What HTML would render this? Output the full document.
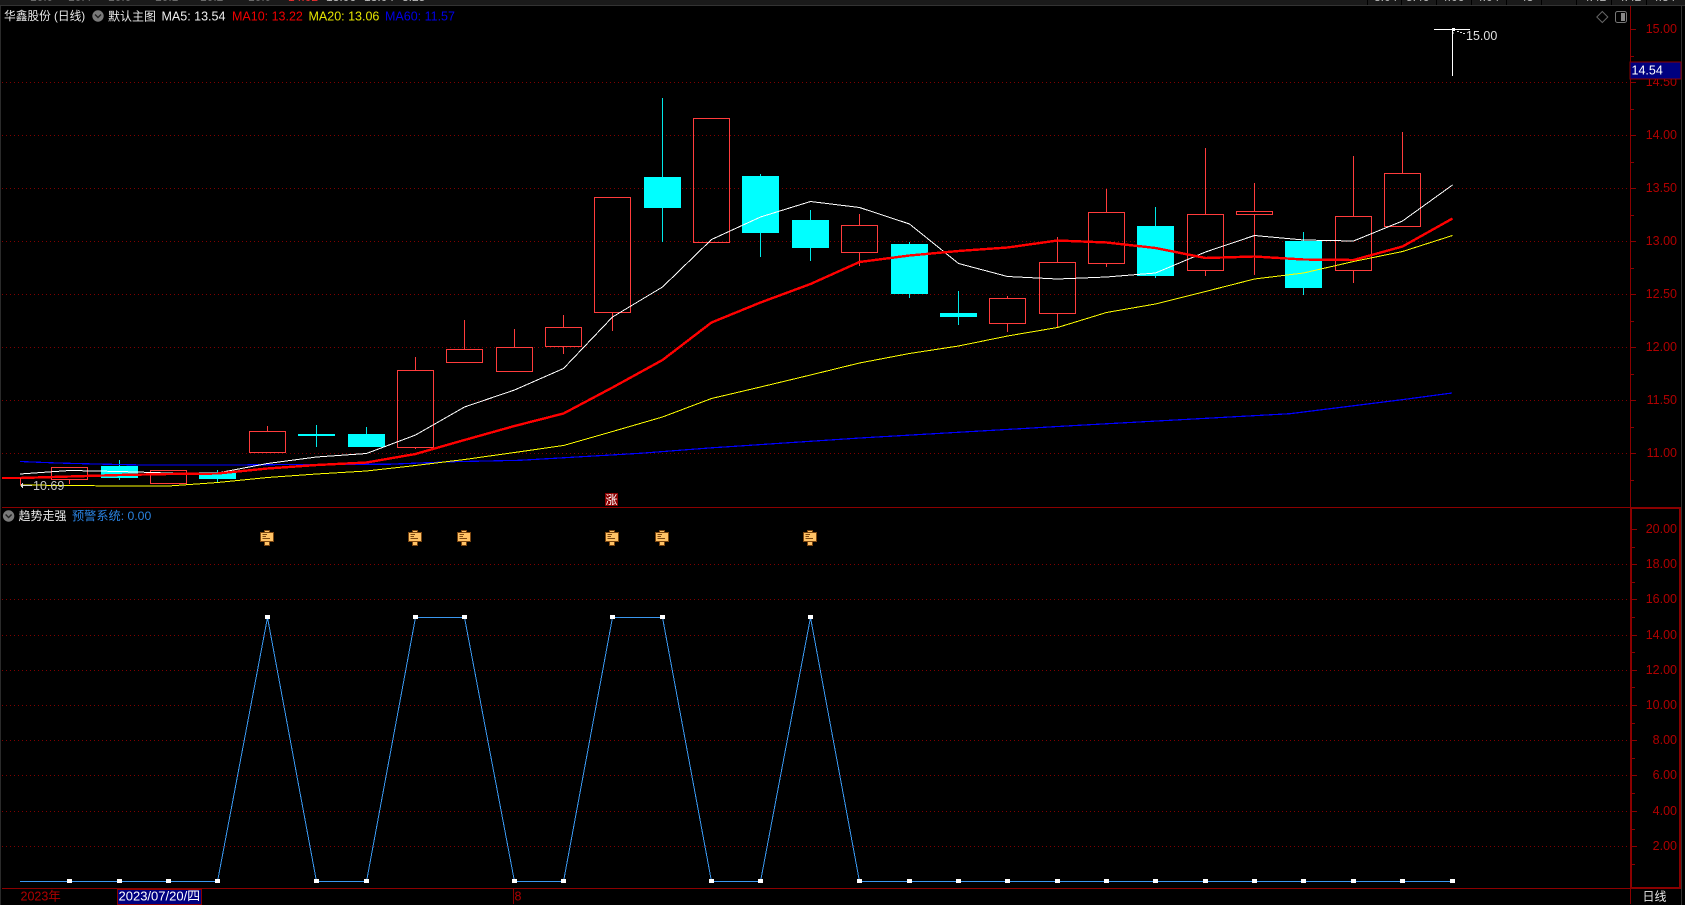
<!DOCTYPE html>
<html lang="zh">
<head>
<meta charset="utf-8">
<title>华鑫股份 (日线)</title>
<style>
html,body{margin:0;padding:0;background:#000;}
body{width:1685px;height:905px;overflow:hidden;position:relative;}
svg{position:absolute;left:0;top:0;display:block;}
text{font-family:"Liberation Sans","Noto Sans CJK SC",sans-serif;font-size:12.5px;}
.ax{fill:#b00000;text-anchor:end;}
</style>
</head>
<body>
<svg width="1685" height="905" viewBox="0 0 1685 905" xmlns="http://www.w3.org/2000/svg">
<defs>
<g id="sig" shape-rendering="crispEdges">
<rect x="-2.5" y="0.5" width="5" height="3" fill="#ffc266" stroke="#7a4510"/>
<rect x="-2.5" y="11.5" width="5" height="4" fill="#ffc266" stroke="#7a4510"/>
<rect x="-6.5" y="2.5" width="13" height="9" fill="#ffc266" stroke="#7a4510"/>
<path d="M-4.5 4.5H0M-4.5 6.5H-1M-4.5 8.5H3" stroke="#7a4510" fill="none"/>
</g>
</defs>
<rect width="1685" height="905" fill="#000"/>

<!-- top strip -->
<rect x="0" y="0" width="1685" height="5" fill="#1a1a1a"/>
<rect x="0" y="5" width="1685" height="1" fill="#333"/>
<svg x="0" y="0" width="1685" height="4" style="position:static">
<text x="30" y="0.5" style="font-size:12px" fill="#bbb">13.5</text>
<text x="68" y="0.5" style="font-size:12px" fill="#bbb">13.4</text>
<text x="108" y="0.5" style="font-size:12px" fill="#bbb">13.3</text>
<text x="155" y="0.5" style="font-size:12px" fill="#bbb">13.1</text>
<text x="200" y="0.5" style="font-size:12px" fill="#bbb">13.2</text>
<text x="248" y="0.5" style="font-size:12px" fill="#bbb">13.5</text>
<text x="288" y="1" style="font-size:12px" fill="#f03030">14.02</text>
<text x="326" y="1" style="font-size:12px" fill="#bbb">13.06</text>
<text x="364" y="1" style="font-size:12px" fill="#bbb">13.04</text>
<text x="402" y="1" style="font-size:12px" fill="#bbb">3.25</text>
<text x="1374" y="1" style="font-size:12px" fill="#bbb">3.04</text>
<text x="1406" y="1" style="font-size:12px" fill="#bbb">5.46</text>
<text x="1441" y="1" style="font-size:12px" fill="#bbb">4.06</text>
<text x="1476" y="1" style="font-size:12px" fill="#bbb">4.04</text>
<text x="1520" y="1" style="font-size:12px" fill="#bbb">43</text>
<text x="1583" y="1" style="font-size:12px" fill="#bbb">4.42</text>
<text x="1618" y="1" style="font-size:12px" fill="#bbb">4.42</text>
<text x="1652" y="1" style="font-size:12px" fill="#bbb">4.34</text>
</svg>
<path d="M1367.5 0V5M1401.5 0V5M1436.5 0V5M1471.5 0V5M1506.5 0V5M1541.5 0V5M1576.5 0V5M1611.5 0V5M1646.5 0V5" stroke="#000" shape-rendering="crispEdges"/>

<!-- edges -->
<rect x="0" y="6" width="1" height="899" fill="#2a2a2a"/>
<rect x="1681" y="6" width="1" height="899" fill="#333"/>

<!-- grids -->
<path d="M2 82.5H1630M2 135.5H1630M2 188.5H1630M2 241.5H1630M2 294.5H1630M2 347.5H1630M2 400.5H1630M2 453.5H1630M2 564.5H1630M2 599.5H1630M2 635.5H1630M2 670.5H1630M2 705.5H1630M2 740.5H1630M2 775.5H1630M2 811.5H1630M2 846.5H1630" stroke="#800000" stroke-dasharray="1 3" fill="none" shape-rendering="crispEdges"/>

<!-- axis frame -->
<g shape-rendering="crispEdges" fill="none" stroke="#8b0000">
<path d="M1630.5 6V507"/>
<path d="M2 507.5H1630M2 888.5H1630" />
<rect x="1631" y="508" width="49" height="380" stroke-width="2"/>
<path d="M1630.5 889V904M513.5 889V904"/>
<path d="M1631 29.5h5M1631 82.5h5M1631 135.5h5M1631 188.5h5M1631 241.5h5M1631 294.5h5M1631 347.5h5M1631 400.5h5M1631 453.5h5"/>
<path d="M1631 56.5h3M1631 109.5h3M1631 162.5h3M1631 215.5h3M1631 268.5h3M1631 321.5h3M1631 374.5h3M1631 427.5h3M1631 480.5h3"/>
<path d="M1632 529.5h5M1632 564.5h5M1632 599.5h5M1632 635.5h5M1632 670.5h5M1632 705.5h5M1632 740.5h5M1632 775.5h5M1632 811.5h5M1632 846.5h5"/>
<path d="M1632 547.5h3M1632 582.5h3M1632 617.5h3M1632 652.5h3M1632 687.5h3M1632 723.5h3M1632 758.5h3M1632 793.5h3M1632 829.5h3M1632 864.5h3"/>
</g>

<!-- price labels -->
<text class="ax" x="1677" y="33">15.00</text>
<text class="ax" x="1677" y="86">14.50</text>
<text class="ax" x="1677" y="139">14.00</text>
<text class="ax" x="1677" y="192">13.50</text>
<text class="ax" x="1677" y="245">13.00</text>
<text class="ax" x="1677" y="298">12.50</text>
<text class="ax" x="1677" y="351">12.00</text>
<text class="ax" x="1677" y="404">11.50</text>
<text class="ax" x="1677" y="457">11.00</text>
<text class="ax" x="1677" y="533">20.00</text>
<text class="ax" x="1677" y="568">18.00</text>
<text class="ax" x="1677" y="603">16.00</text>
<text class="ax" x="1677" y="639">14.00</text>
<text class="ax" x="1677" y="674">12.00</text>
<text class="ax" x="1677" y="709">10.00</text>
<text class="ax" x="1677" y="744">8.00</text>
<text class="ax" x="1677" y="779">6.00</text>
<text class="ax" x="1677" y="815">4.00</text>
<text class="ax" x="1677" y="850">2.00</text>

<!-- current price box -->
<rect x="1630" y="62" width="51" height="17" fill="#000080" stroke="#8b0000" shape-rendering="crispEdges"/>
<text x="1631.5" y="74.5" fill="#fff">14.54</text>

<!-- red candles -->
<g fill="none" stroke="#ff3c3c" shape-rendering="crispEdges">
<path d="M51.5 467.5h36v12h-36zM69.5 480V484"/>
<path d="M150.5 470.5h36v13h-36z"/>
<path d="M249.5 431.5h36v21h-36zM267.5 426V431"/>
<path d="M397.5 370.5h36v77h-36zM415.5 357V370M415.5 448V449"/>
<path d="M446.5 349.5h36v13h-36zM464.5 320V349"/>
<path d="M496.5 347.5h36v24h-36zM514.5 329V347"/>
<path d="M545.5 327.5h36v19h-36zM563.5 315V327M563.5 347V354"/>
<path d="M594.5 197.5h36v115h-36zM612.5 313V331"/>
<path d="M693.5 118.5h36v124h-36z"/>
<path d="M841.5 225.5h36v27h-36zM859.5 214V225M859.5 253V266"/>
<path d="M989.5 298.5h36v25h-36zM1007.5 296V298M1007.5 324V332"/>
<path d="M1039.5 262.5h36v51h-36zM1057.5 237V262M1057.5 314V328"/>
<path d="M1088.5 212.5h36v51h-36zM1106.5 189V212M1106.5 264V267"/>
<path d="M1187.5 214.5h36v56h-36zM1205.5 148V214M1205.5 271V276"/>
<path d="M1236.5 211.5h36v3h-36zM1254.5 183V211M1254.5 215V275"/>
<path d="M1335.5 216.5h36v54h-36zM1353.5 156V216M1353.5 271V283"/>
<path d="M1384.5 173.5h36v53h-36zM1402.5 132V173"/>
</g>

<!-- cyan candles -->
<g shape-rendering="crispEdges">
<path d="M119.5 460V480M217.5 470V482M316.5 425V447M366.5 427V434M662.5 98V242M760.5 174V257M810.5 210V261M909.5 242V298M958.5 291V325M1155.5 207V278M1303.5 232V295" stroke="#00e8e8" fill="none"/>
<g fill="#00ffff">
<rect x="101" y="466" width="37" height="12"/>
<rect x="199" y="472" width="37" height="7"/>
<rect x="298" y="434" width="37" height="2"/>
<rect x="348" y="434" width="37" height="13"/>
<rect x="644" y="177" width="37" height="31"/>
<rect x="742" y="176" width="37" height="57"/>
<rect x="792" y="220" width="37" height="28"/>
<rect x="891" y="244" width="37" height="50"/>
<rect x="940" y="313" width="37" height="4"/>
<rect x="1137" y="226" width="37" height="50"/>
<rect x="1285" y="241" width="37" height="47"/>
</g>
</g>

<!-- moving averages -->
<g fill="none" shape-rendering="crispEdges">
<polyline stroke="#0000ff" stroke-width="1.2" points="20,461.5 57,463 95,464 143,465 228,465 296,464.5 387,464.3 453,461.7 520,460.3 640,453.3 709,448 860,438 1075,425.5 1290,413.7 1402,399.7 1452,393"/>
<polyline stroke="#ffff00" stroke-width="1" points="20,485 69.5,485.5 119.5,486 168.5,486 217.5,482.5 267.5,477.5 316.5,474 366.5,471 415.5,465.5 464.5,459.5 514.5,452.5 563.5,445.5 612.5,431.5 662.5,417 711.5,398.5 760.5,387 810.5,375 859.5,363 909.5,353.5 958.5,346 1007.5,336 1057.5,327.5 1106.5,312.5 1155.5,304 1205.5,291.5 1254.5,279 1303.5,273 1353.5,261.5 1402.5,251.5 1452.5,235.5"/>
<polyline stroke="#ffffff" stroke-width="1" points="20,474 69.5,470.5 119.5,471.5 168.5,473 217.5,473 267.5,463.5 316.5,457 366.5,453.5 415.5,435 464.5,407 514.5,390 563.5,368.5 612.5,317 662.5,287 711.5,239.5 760.5,217 810.5,201.5 859.5,207.5 909.5,224 958.5,263.5 1007.5,276.5 1057.5,279 1106.5,277 1155.5,273 1205.5,252 1254.5,235.5 1303.5,240 1353.5,241 1402.5,221 1452.5,185"/>
<polyline stroke="#ff0000" stroke-width="2.4" points="2,478 20,478 69.5,476.5 119.5,475 168.5,474 217.5,473.5 267.5,468.5 316.5,465 366.5,462.5 415.5,454 464.5,440 514.5,426 563.5,413.5 612.5,387.5 662.5,360 711.5,322.5 760.5,302.5 810.5,284 859.5,262 909.5,255.5 958.5,251 1007.5,247.5 1057.5,240.5 1106.5,242.5 1155.5,248 1205.5,258 1254.5,256.5 1303.5,259.5 1353.5,260 1402.5,246.5 1452.5,218.5"/>
</g>

<!-- low / high annotations -->
<g shape-rendering="crispEdges">
<path d="M21 485.5H32M21 484.5h2M21 486.5h2M22 483.5h1M22 487.5h1" stroke="#ddd" fill="none"/>
<path d="M20.5 478V485" stroke="#ff3c3c" fill="none"/>
<path d="M1452.5 29V76M1434 29.5H1470" stroke="#fff" fill="none"/>
<rect x="1452" y="28" width="3" height="3" fill="#fff"/>
<path d="M1457 31.5h2M1460 32.5h2M1463 33.5h2M1453 33h1" stroke="#ddd" fill="none"/>
</g>
<text x="33" y="490" fill="#c8c8c8">10.69</text>
<text x="1466" y="40" fill="#e0e0e0">15.00</text>

<!-- 涨 badge -->
<rect x="605" y="493" width="13" height="13" fill="#8b0000"/>
<text x="605.5" y="504" fill="#fff" style="font-size:12px">涨</text>

<!-- header texts -->
<g>
<circle cx="98" cy="16" r="5.7" fill="#7a7a7a"/>
<path d="M95 14.5l3 3 3-3" fill="none" stroke="#222" stroke-width="1.4"/>
<text x="4" y="20" fill="#e8e8e8" style="font-size:11.7px">华鑫股份 (日线)</text>
<text x="108" y="20.5" fill="#e8e8e8" style="font-size:12px">默认主图</text>
<text x="161.5" y="20.5" fill="#f0f0f0">MA5: 13.54</text>
<text x="232" y="20.5" fill="#f00000">MA10: 13.22</text>
<text x="308.5" y="20.5" fill="#e6e600">MA20: 13.06</text>
<text x="385" y="20.5" fill="#0000e6">MA60: 11.57</text>
</g>

<!-- top right icons -->
<path d="M1602.3 11.5l5.5 5.5-5.5 5.5-5.5-5.5z" fill="none" stroke="#666"/>
<rect x="1615.5" y="11.5" width="11" height="11" rx="2" fill="none" stroke="#777"/>
<rect x="1621" y="13" width="4" height="8" fill="#888"/>

<!-- lower panel header -->
<circle cx="8.6" cy="516" r="5.7" fill="#7a7a7a"/>
<path d="M5.6 514.5l3 3 3-3" fill="none" stroke="#222" stroke-width="1.4"/>
<text x="18.5" y="520" fill="#e8e8e8" style="font-size:12px">趋势走强</text>
<text x="72" y="520" fill="#2a82e0" style="font-size:12.2px">预警系统: 0.00</text>

<!-- signal icons -->
<use href="#sig" x="267" y="530"/>
<use href="#sig" x="415" y="530"/>
<use href="#sig" x="464" y="530"/>
<use href="#sig" x="612" y="530"/>
<use href="#sig" x="662" y="530"/>
<use href="#sig" x="810" y="530"/>

<!-- indicator line -->
<polyline fill="none" stroke="#3a98f0" stroke-width="1" shape-rendering="crispEdges" points="20,881.5 69.5,881.5 119.5,881.5 168.5,881.5 217.5,881.5 267.5,617.5 316.5,881.5 366.5,881.5 415.5,617.5 464.5,617.5 514.5,881.5 563.5,881.5 612.5,617.5 662.5,617.5 711.5,881.5 760.5,881.5 810.5,617.5 859.5,881.5 1452.5,881.5"/>
<g fill="#fff" shape-rendering="crispEdges">
<rect x="67" y="879" width="5" height="4"/><rect x="117" y="879" width="5" height="4"/><rect x="166" y="879" width="5" height="4"/><rect x="215" y="879" width="5" height="4"/>
<rect x="265" y="615" width="5" height="4"/><rect x="314" y="879" width="5" height="4"/><rect x="364" y="879" width="5" height="4"/>
<rect x="413" y="615" width="5" height="4"/><rect x="462" y="615" width="5" height="4"/><rect x="512" y="879" width="5" height="4"/><rect x="561" y="879" width="5" height="4"/>
<rect x="610" y="615" width="5" height="4"/><rect x="660" y="615" width="5" height="4"/><rect x="709" y="879" width="5" height="4"/><rect x="758" y="879" width="5" height="4"/>
<rect x="808" y="615" width="5" height="4"/><rect x="857" y="879" width="5" height="4"/><rect x="907" y="879" width="5" height="4"/><rect x="956" y="879" width="5" height="4"/>
<rect x="1005" y="879" width="5" height="4"/><rect x="1055" y="879" width="5" height="4"/><rect x="1104" y="879" width="5" height="4"/><rect x="1153" y="879" width="5" height="4"/>
<rect x="1203" y="879" width="5" height="4"/><rect x="1252" y="879" width="5" height="4"/><rect x="1301" y="879" width="5" height="4"/><rect x="1351" y="879" width="5" height="4"/>
<rect x="1400" y="879" width="5" height="4"/><rect x="1450" y="879" width="5" height="4"/>
</g>

<!-- bottom bar -->
<rect x="117.5" y="889.5" width="84" height="15" fill="#000080" stroke="#8b0000" shape-rendering="crispEdges"/>
<text x="20.5" y="900.5" fill="#b00000">2023年</text>
<text x="118.5" y="900.5" fill="#fff" style="font-size:13px">2023/07/20/四</text>
<text x="514.5" y="900.5" fill="#b00000">8</text>
<text x="1642.5" y="900.5" fill="#e8e8e8" style="font-size:12px">日线</text>
</svg>
</body>
</html>
